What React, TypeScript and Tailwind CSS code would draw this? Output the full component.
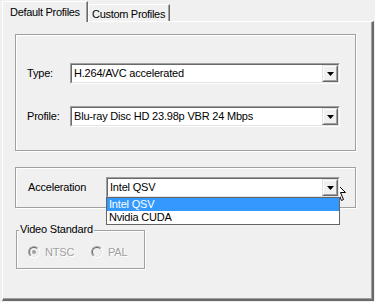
import React from "react";

const Combo: React.FC<{ value: string; width: string }> = ({ value, width }) => (
  <div className={`${width} h-[21px] border border-t-[#a0a0a0] border-l-[#a0a0a0] border-r-white border-b-white`}>
    <div className="flex h-full border border-t-[#696969] border-l-[#696969] border-r-[#e3e3e3] border-b-[#e3e3e3] bg-white">
      <div className="flex-1 pl-[2px] leading-[17px] whitespace-nowrap overflow-hidden">{value}</div>
      <DropButton />
    </div>
  </div>
);

const DropButton: React.FC = () => (
  <div className="w-[16px] h-[17px] border border-t-[#e3e3e3] border-l-[#e3e3e3] border-r-[#696969] border-b-[#696969]">
    <div className="flex h-full items-center justify-center border border-t-white border-l-white border-r-[#a0a0a0] border-b-[#a0a0a0] bg-[#f0f0f0]">
      <svg width="7" height="4" viewBox="0 0 7 4">
        <polygon points="0,0 7,0 3.5,4" fill="#000" />
      </svg>
    </div>
  </div>
);

const Radio: React.FC<{ label: string; checked?: boolean; width: string }> = ({ label, checked, width }) => (
  <div className={`${width} flex items-center gap-[5px]`}>
    <div className="w-[12px] h-[12px] rounded-full border border-t-[#a0a0a0] border-l-[#a0a0a0] border-r-white border-b-white">
      <div className="flex h-full items-center justify-center rounded-full border border-t-[#696969] border-l-[#696969] border-r-[#e3e3e3] border-b-[#e3e3e3] bg-[#f0f0f0]">
        {checked && <div className="w-[4px] h-[4px] rounded-full bg-[#a0a0a0]" />}
      </div>
    </div>
    <span className="text-[#a0a0a0] [text-shadow:1px_1px_0_#fff]">{label}</span>
  </div>
);

export default function App() {
  return (
    <div className="relative w-[375px] h-[302px] bg-[#f0f0f0] pl-[2px] text-[11px] tracking-[-0.2px] text-black font-['Liberation_Sans',Arial,sans-serif] overflow-hidden">
      {/* tabs */}
      <div className="flex items-end h-[21px] whitespace-nowrap tracking-[-0.3px]">
        <div className="relative z-10 h-[21px] w-[86px] mb-[-1px] bg-[#f0f0f0] border-t border-l border-r border-t-white border-l-white border-r-[#696969] shadow-[inset_-1px_0_0_#a0a0a0] pl-[7px] pt-[2px]">
          Default Profiles
        </div>
        <div className="h-[17px] w-[82px] border-t border-r border-t-white border-r-[#696969] shadow-[inset_-1px_0_0_#a0a0a0,inset_1px_0_0_#fff] pl-[4px] pt-[1px]">
          Custom Profiles
        </div>
      </div>

      {/* tab page */}
      <div className="w-[372px] h-[280px] border-t border-l border-t-white border-l-white border-r-2 border-b-2 border-r-[#696969] border-b-[#696969] shadow-[inset_-1px_-1px_0_#a0a0a0] pl-[12px] pt-[12px]">
        {/* profile group */}
        <div className="w-[341px] h-[117px] border border-[#a0a0a0] shadow-[inset_1px_1px_0_#fff,1px_1px_0_#fff] pl-[11px] pt-[28px]">
          <div className="flex items-center">
            <div className="w-[43px]">Type:</div>
            <Combo value="H.264/AVC accelerated" width="w-[270px]" />
          </div>
          <div className="flex items-center mt-[22px]">
            <div className="w-[43px]">Profile:</div>
            <Combo value="Blu-ray Disc HD 23.98p VBR 24 Mbps" width="w-[270px]" />
          </div>
        </div>

        {/* acceleration group */}
        <div className="mt-[16px] w-[341px] h-[41px] border border-[#a0a0a0] shadow-[inset_1px_1px_0_#fff,1px_1px_0_#fff] pl-[12px] flex items-center">
          <div className="w-[78px]">Acceleration</div>
          <div className="relative z-10">
            <Combo value="Intel QSV" width="w-[234px]" />
            <div className="absolute left-0 top-[20px] w-[234px] h-[28px] border border-[#646464] bg-white">
              <div className="h-[13px] leading-[13px] pl-[2px] bg-[#3399ff] text-white">Intel QSV</div>
              <div className="h-[13px] leading-[13px] pl-[2px]">Nvidia CUDA</div>
            </div>
          </div>
        </div>

        {/* video standard group */}
        <div className="relative mt-[22px] ml-[1px] w-[129px] h-[39px] border border-[#a0a0a0] shadow-[inset_1px_1px_0_#fff,1px_1px_0_#fff] pl-[11px] pt-[13px]">
          <span className="absolute left-[2px] top-[-8px] px-[1px] bg-[#f0f0f0] leading-[13px]">Video Standard</span>
          <div className="flex items-center">
            <Radio label="NTSC" checked width="w-[63px]" />
            <Radio label="PAL" width="w-[50px]" />
          </div>
        </div>
      </div>

      {/* mouse pointer */}
      <svg className="absolute left-[334px] top-[181px]" width="12" height="20" viewBox="0 0 12 20">
        <path d="M0.5 0.5 L0.5 16.5 L4.5 12.5 L7.5 19.5 L9.5 18.5 L6.5 11.5 L11.5 11.5 Z" fill="#fff" stroke="#000" strokeWidth="1" />
      </svg>
    </div>
  );
}
